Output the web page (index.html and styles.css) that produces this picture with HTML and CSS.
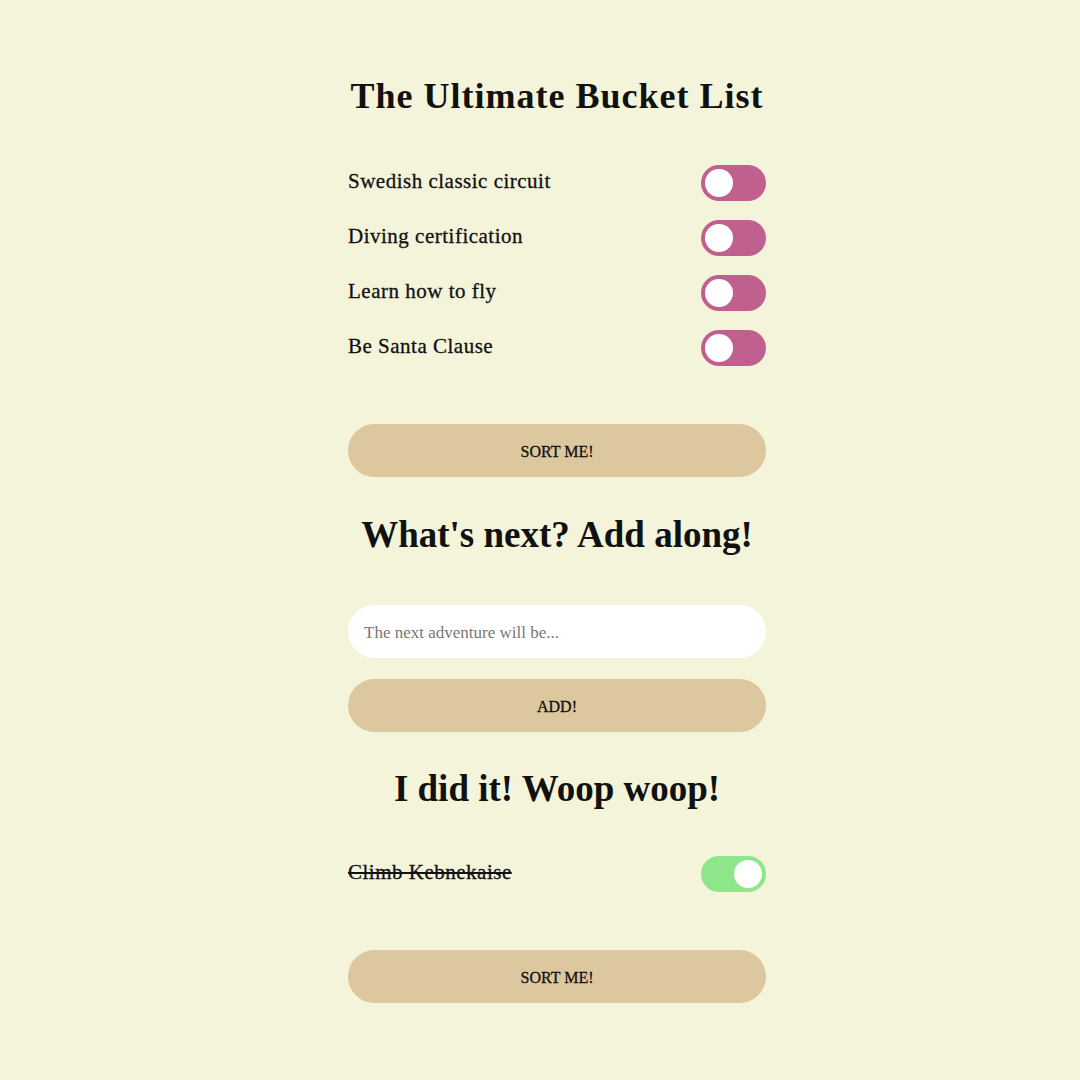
FILE: index.html
```html
<!DOCTYPE html>
<html lang="en">
<head>
<meta charset="utf-8">
<title>The Ultimate Bucket List</title>
<link rel="stylesheet" href="styles.css">
</head>
<body>
<main class="app">
  <h1 class="title">The Ultimate Bucket List</h1>
  <ul class="list">
    <li class="item"><span class="label">Swedish classic circuit</span><span class="toggle"><span class="knob"></span></span></li>
    <li class="item"><span class="label">Diving certification</span><span class="toggle"><span class="knob"></span></span></li>
    <li class="item"><span class="label">Learn how to fly</span><span class="toggle"><span class="knob"></span></span></li>
    <li class="item"><span class="label">Be Santa Clause</span><span class="toggle"><span class="knob"></span></span></li>
  </ul>
  <button class="btn btn-sort-top">SORT ME!</button>
  <h2 class="subtitle sub-next">What's next? Add along!</h2>
  <input class="field" type="text" placeholder="The next adventure will be...">
  <button class="btn btn-add">ADD!</button>
  <h2 class="subtitle sub-done">I did it! Woop woop!</h2>
  <ul class="list list-done">
    <li class="item"><span class="label done">Climb Kebnekaise</span><span class="toggle on"><span class="knob"></span></span></li>
  </ul>
  <button class="btn btn-sort-bottom">SORT ME!</button>
</main>
</body>
</html>
```
FILE: styles.css
```css
html, body {
  margin: 0;
  padding: 0;
  background: #f4f4da;
}
body {
  font-family: "Liberation Serif", "Times New Roman", serif;
  color: #111;
}
.app {
  width: 418px;
  margin-left: 348px;
  padding-top: 74px;
  display: flex;
  flex-direction: column;
}
.title {
  margin: 0;
  font-size: 36px;
  font-weight: bold;
  letter-spacing: 1px;
  text-align: center;
  line-height: 44px;
}
.list {
  list-style: none;
  margin: 0;
  padding: 0;
}
.list {
  margin-top: 47px;
  display: flex;
  flex-direction: column;
  gap: 19px;
}
.item {
  display: flex;
  align-items: center;
  justify-content: space-between;
  height: 36px;
}
.label {
  font-size: 21px;
  letter-spacing: 0.5px;
  margin-top: -4px;
  -webkit-text-stroke: 0.3px #111;
}
.label.done {
  text-decoration: line-through;
}
.toggle {
  width: 65px;
  height: 36px;
  border-radius: 18px;
  background: #c0608e;
  position: relative;
  box-sizing: border-box;
}
.knob {
  position: absolute;
  left: 4px;
  top: 4px;
  width: 28px;
  height: 28px;
  border-radius: 50%;
  background: #fff;
}
.toggle.on {
  background: #8ee68a;
}
.toggle.on .knob {
  left: 33px;
}
.btn {
  width: 418px;
  height: 53px;
  border: none;
  border-radius: 27px;
  background: #dcc79f;
  font-family: "Liberation Serif", "Times New Roman", serif;
  font-size: 16px;
  color: #111;
  padding: 3px 0 0;
  -webkit-text-stroke: 0.3px #111;
}
.btn-sort-top {
  margin-top: 58px;
}
.subtitle {
  margin: 0;
  text-align: center;
  font-size: 37px;
  font-weight: bold;
  line-height: 46px;
}
.sub-next {
  margin-top: 35px;
}
.field {
  margin-top: 47px;
  width: 418px;
  height: 53px;
  box-sizing: border-box;
  border: none;
  border-radius: 27px;
  background: #fff;
  padding: 2px 16px 0;
  font-family: "Liberation Serif", "Times New Roman", serif;
  font-size: 17px;
  outline: none;
}
.field::placeholder {
  color: #777;
}
.btn-add {
  margin-top: 21px;
}
.sub-done {
  margin-top: 34px;
}
.list-done {
  margin-top: 44px;
}
.btn-sort-bottom {
  margin-top: 58px;
}
```
